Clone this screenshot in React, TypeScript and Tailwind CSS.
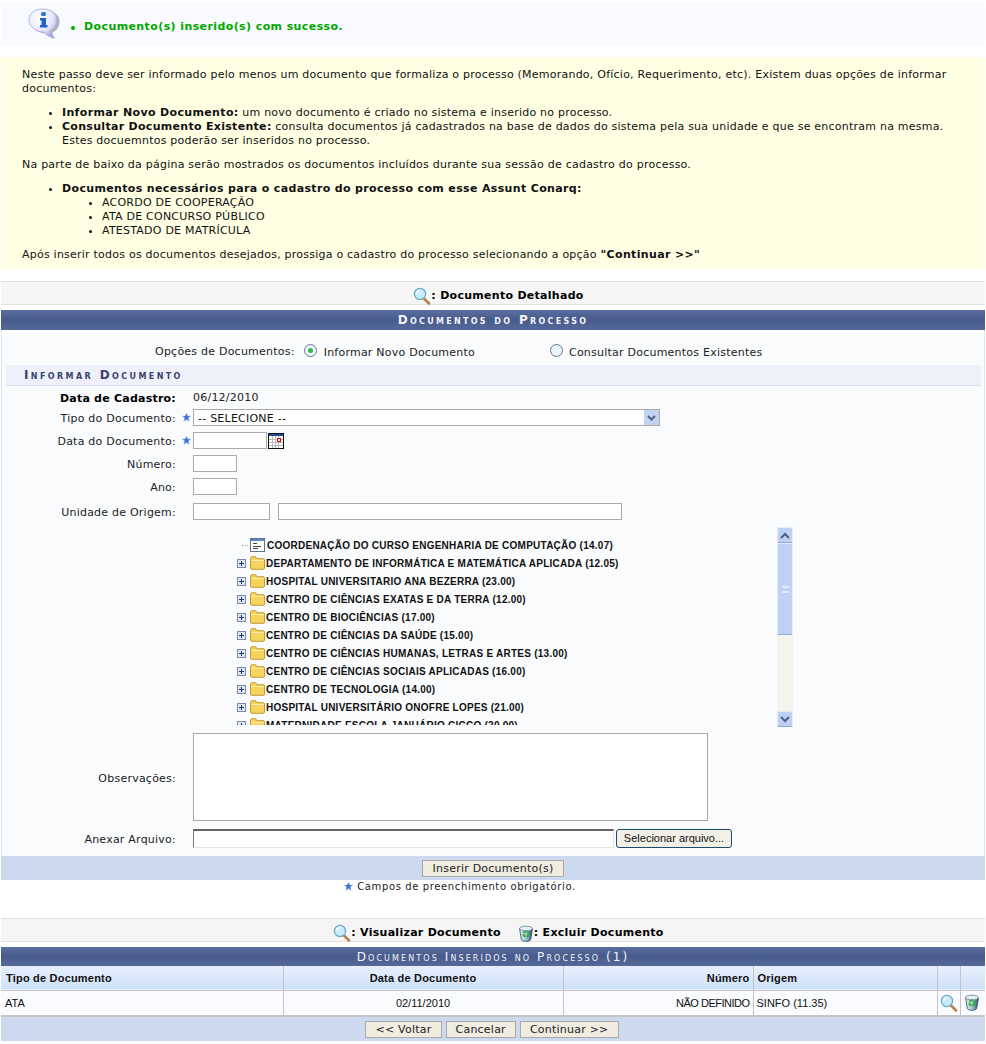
const VERDANA = "font-['DejaVu_Sans',Verdana,sans-serif]"

const UNITS = [
  'DEPARTAMENTO DE INFORMÁTICA E MATEMÁTICA APLICADA (12.05)',
  'HOSPITAL UNIVERSITARIO ANA BEZERRA (23.00)',
  'CENTRO DE CIÊNCIAS EXATAS E DA TERRA (12.00)',
  'CENTRO DE BIOCIÊNCIAS (17.00)',
  'CENTRO DE CIÊNCIAS DA SAÚDE (15.00)',
  'CENTRO DE CIÊNCIAS HUMANAS, LETRAS E ARTES (13.00)',
  'CENTRO DE CIÊNCIAS SOCIAIS APLICADAS (16.00)',
  'CENTRO DE TECNOLOGIA (14.00)',
  'HOSPITAL UNIVERSITÁRIO ONOFRE LOPES (21.00)',
  'MATERNIDADE ESCOLA JANUÁRIO CICCO (20.00)',
]

function InfoIcon() {
  const bubble = 'M15 1c8 0 14 4 14 11 0 5-3 9-7 11 0 2 1 4 3 6-4 0-7-2-9-5C8 24 1 19 1 12 1 5 7 1 15 1z'
  return (
    <svg width="34" height="32" viewBox="0 0 34 32">
      <defs>
        <radialGradient id="bubble" cx="35%" cy="30%" r="75%">
          <stop offset="0" stopColor="#ffffff" />
          <stop offset="0.65" stopColor="#e6e8fa" />
          <stop offset="1" stopColor="#a9aee6" />
        </radialGradient>
      </defs>
      <path d={bubble} transform="translate(2.500 1.500)" fill="#777777" opacity="0.55" />
      <path d={bubble} fill="url(#bubble)" stroke="#a4a9e0" strokeWidth="0.8" />
      <rect x="13" y="4" width="5" height="4" rx="1.500" fill="#2a79d8" />
      <path d="M12 10h6v7h1.500v2.500h-7.500V17h1.500v-4.500H12z" fill="#1e63c4" />
    </svg>
  )
}

function MagnifierIcon() {
  return (
    <svg width="18" height="18" viewBox="0 0 18 18">
      <path d="M10.500 11l5.500 5.500" stroke="#b8834a" strokeWidth="2.600" strokeLinecap="round" />
      <circle cx="7" cy="7" r="5.600" fill="#c9ecfa" stroke="#6fa9c9" strokeWidth="1.300" />
      <path d="M3.600 6.500a3.600 3.600 0 0 1 3-3" stroke="#ffffff" strokeWidth="1.400" fill="none" />
    </svg>
  )
}

function TrashIcon() {
  return (
    <svg width="16" height="17" viewBox="0 0 16 17">
      <defs>
        <linearGradient id="bin" x1="0" x2="1" y1="0" y2="0">
          <stop offset="0" stopColor="#dbe9ee" />
          <stop offset="0.5" stopColor="#a9c6d6" />
          <stop offset="1" stopColor="#234c78" />
        </linearGradient>
      </defs>
      <path d="M1.500 3.500l1.800 11c.2 1 2.200 1.800 4.700 1.800s4.500-.8 4.700-1.800l1.800-11z" fill="url(#bin)" stroke="#1a3658" strokeWidth="0.700" />
      <ellipse cx="8" cy="3.500" rx="6.500" ry="2.300" fill="#e6f1f2" stroke="#5f8298" strokeWidth="0.800" />
      <circle cx="8" cy="9" r="2.600" fill="none" stroke="#2fae2c" strokeWidth="1.800" strokeDasharray="3.500 1" />
    </svg>
  )
}

function StarIcon() {
  return (
    <svg width="9" height="9" viewBox="0 0 10 10">
      <path d="M5 .4l1.400 3h3.200L7 5.500l1 3.800L5 7.300 2 9.300l1-3.800L.4 3.400h3.200z" fill="#3a73d6" stroke="#8fb2ee" strokeWidth="0.500" />
    </svg>
  )
}

function CalendarIcon() {
  return (
    <svg width="16" height="16" viewBox="0 0 16 16" shapeRendering="crispEdges">
      <rect x="0.500" y="0.500" width="15" height="15" fill="#ffffff" stroke="#111111" />
      <rect x="1" y="1" width="14" height="2" fill="#1f4a94" />
      <path d="M1 6.500h14M1 9.500h14M1 12.500h14M4.500 3v12M7.500 3v12M10.500 3v12" stroke="#bcbcbc" />
      <rect x="9.500" y="5.500" width="3" height="3" fill="#ffffff" stroke="#ee0000" />
    </svg>
  )
}

function FolderIcon() {
  return (
    <svg width="15" height="14" viewBox="0 0 15 14">
      <path d="M.5 3V12c0 .8.500 1.300 1.300 1.300h11.400c.8 0 1.300-.5 1.300-1.300V4c0-.8-.5-1.300-1.300-1.300H7L5.800.8H2C1 .8.500 1.500.5 3z" fill="#f9d45c" stroke="#c09a3a" />
      <path d="M1.500 4.500h12" stroke="#fff0b0" />
    </svg>
  )
}

function PlusBox() {
  return (
    <svg width="9" height="9" viewBox="0 0 9 9" shapeRendering="crispEdges">
      <rect x="0.500" y="0.500" width="8" height="8" fill="#dfe5f2" stroke="#7d8ba8" />
      <path d="M2 4.500h5M4.500 2v5" stroke="#1d3a78" />
    </svg>
  )
}

function DocListIcon() {
  return (
    <svg width="15" height="14" viewBox="0 0 15 14" shapeRendering="crispEdges">
      <rect x="0.500" y="0.500" width="14" height="13" fill="#ffffff" stroke="#5d7398" />
      <rect x="1" y="1" width="13" height="2" fill="#5f86c4" />
      <path d="M3 5.500h4M3 8.500h8M3 10.500h5" stroke="#444444" />
    </svg>
  )
}

function ScrollButton({ up }: { up?: boolean }) {
  return (
    <div className="flex h-[16px] w-[16px] items-center justify-center rounded-[2px] border border-[#e6ecf9] border-b-[#8fa8d8] bg-[#bfd0f5]">
      <svg width="10" height="7" viewBox="0 0 10 7">
        <path d={up ? 'M1 6l4-4 4 4' : 'M1 1l4 4 4-4'} fill="none" stroke="#4d6185" strokeWidth="2" />
      </svg>
    </div>
  )
}

function Legend({ children }: { children: React.ReactNode }) {
  return (
    <div className="flex h-[24px] items-center justify-center border-y border-[#e0e0e0] bg-[#f5f5f5] pl-[11px] pt-[6px] text-[11px] font-bold tracking-[0.28px] text-black">
      {children}
    </div>
  )
}

function FormRow({ label, required, bold, className, children }: { label: string; required?: boolean; bold?: boolean; className?: string; children: React.ReactNode }) {
  return (
    <div className={`flex items-center ${className ?? ''}`}>
      <div className={`w-[174px] pt-[4px] text-right text-[11px] ${bold ? 'font-bold text-black' : 'text-[#222]'}`}>{label}</div>
      <div className="flex w-[17px] justify-center pl-[3px]">{required && <StarIcon />}</div>
      {children}
    </div>
  )
}

function TextBox({ className }: { className: string }) {
  return <input className={`h-[17px] border border-[#aaa] bg-white ${className}`} />
}

function FormButton({ className, children }: { className: string; children: React.ReactNode }) {
  return (
    <button className={`h-[17px] border border-[#a9a9a9] bg-[#f0ece0] font-['DejaVu_Sans',Verdana,sans-serif] text-[11px] leading-none tracking-[0.23px] text-[#222] ${className}`}>
      {children}
    </button>
  )
}

export default function App() {
  return (
    <div className={`h-[1044px] w-[986px] overflow-hidden bg-white pt-[2px] text-[11px] tracking-[0.23px] ${VERDANA}`}>
      {/* Message */}
      <div className="mx-[1px] flex h-[44px] items-center bg-[#f9fafd] pl-[27px]">
        <InfoIcon />
        <ul className="ml-[9px] mt-[7px] flex items-center gap-[9px] text-[11px] font-bold tracking-[0.4px] text-[#00a800]">
          <li className="h-[4px] w-[4px] rounded-full bg-[#00a800]" />
          <li>Documento(s) inserido(s) com sucesso.</li>
        </ul>
      </div>

      {/* Help text */}
      <div className="mx-[1px] mt-[11px] h-[212px] bg-[#ffffe3] pl-[21px] pr-[20px] pt-[11px] leading-[14px] text-[#111]">
        <p>
          Neste passo deve ser informado pelo menos um documento que formaliza o processo (Memorando, Ofício, Requerimento, etc). Existem duas opções de informar documentos:
        </p>
        <ul className="mt-[10px] list-disc pl-[40px]">
          <li><b className="tracking-[0.35px]">Informar Novo Documento:</b> um novo documento é criado no sistema e inserido no processo.</li>
          <li>
            <b className="tracking-[0.3px]">Consultar Documento Existente:</b> consulta documentos já cadastrados na base de dados do sistema pela sua unidade e que se encontram na mesma. <br />Estes docuemntos poderão ser inseridos no processo.
          </li>
        </ul>
        <p className="mt-[10px]">Na parte de baixo da página serão mostrados os documentos incluídos durante sua sessão de cadastro do processo.</p>
        <ul className="mt-[10px] list-disc pl-[40px]">
          <li>
            <b className="tracking-[0.35px]">Documentos necessários para o cadastro do processo com esse Assunt Conarq:</b>
            <ul className="list-disc pl-[40px]">
              <li>ACORDO DE COOPERAÇÃO</li>
              <li>ATA DE CONCURSO PÚBLICO</li>
              <li>ATESTADO DE MATRÍCULA</li>
            </ul>
          </li>
        </ul>
        <p className="mt-[10px]">
          Após inserir todos os documentos desejados, prossiga o cadastro do processo selecionando a opção <b className="tracking-[0.35px]">"Continuar &gt;&gt;"</b>
        </p>
      </div>

      {/* Form legend */}
      <div className="mx-[1px] mt-[12px]">
        <Legend>
          <MagnifierIcon />
          <span>: Documento Detalhado</span>
        </Legend>
      </div>

      {/* Form */}
      <div className="mx-[1px] mt-[5px]">
        <div className="flex h-[20px] items-center justify-center bg-gradient-to-b from-[#5b6e9f] via-[#475a8c] to-[#566a9a] text-[12px] font-bold tracking-[2.3px] text-[#f2f4fa] [font-variant:small-caps]">
          Documentos do Processo
        </div>
        <div className="h-[526px] border-x border-[#dfe5f0] bg-[#f9fbfd]">
          <div className="flex h-[35px] pt-[14px] text-[#222]">
            <div className="ml-[153px]">Opções de Documentos:</div>
            <div className="ml-[9px] flex h-[13px] w-[13px] items-center justify-center rounded-full border-[1.5px] border-[#5b7a97] bg-[#f4f7fb]">
              <span className="h-[5px] w-[5px] rounded-full bg-[#2fb84a]" />
            </div>
            <div className="ml-[7px] mt-[1px]">Informar Novo Documento</div>
            <div className="ml-[75px] h-[13px] w-[13px] rounded-full border-[1.5px] border-[#5b7a97] bg-[#eef2f9]" />
            <div className="ml-[6px] mt-[1px]">Consultar Documentos Existentes</div>
          </div>

          <div className="ml-[4px] mr-[3px] flex h-[21px] items-center border-b border-[#d5dcec] bg-[#eef1f9] pl-[18px] text-[12px] font-bold tracking-[2.4px] text-[#3a4270] [font-variant:small-caps]">
            Informar Documento
          </div>

          <FormRow label="Data de Cadastro:" bold className="mt-[4px] h-[14px]">
            <span className="pt-[2px] text-[#222]">06/12/2010</span>
          </FormRow>
          <FormRow label="Tipo do Documento:" required className="mt-[5px] h-[17px]">
            <div className="flex h-[17px] w-[467px] items-center justify-between border border-[#aaa] bg-white pl-[4px] text-[#111]">
              <span className="pt-[3px]">-- SELECIONE --</span>
              <div className="flex h-[15px] w-[15px] items-center justify-center bg-[#c3d2f3]">
                <svg width="9" height="6" viewBox="0 0 9 6"><path d="M1 1l3.500 3.500L8 1" fill="none" stroke="#4d6185" strokeWidth="2" /></svg>
              </div>
            </div>
          </FormRow>
          <FormRow label="Data do Documento:" required className="mt-[6px] h-[17px]">
            <TextBox className="w-[74px]" />
            <span className="ml-[1px]"><CalendarIcon /></span>
          </FormRow>
          <FormRow label="Número:" className="mt-[6px] h-[17px]">
            <TextBox className="w-[44px]" />
          </FormRow>
          <FormRow label="Ano:" className="mt-[6px] h-[17px]">
            <TextBox className="w-[44px]" />
          </FormRow>
          <FormRow label="Unidade de Origem:" className="mt-[8px] h-[17px]">
            <TextBox className="w-[77px]" />
            <TextBox className="ml-[8px] w-[344px]" />
          </FormRow>

          {/* Tree */}
          <div className="ml-[190px] mt-[7px] flex h-[200px] w-[601px]">
            <div className="h-[198px] flex-1 overflow-hidden pl-[45px] pt-[9px] font-['Liberation_Sans',Arial,sans-serif] text-[10px] font-bold tracking-[0.25px] text-[#111]">
              <div className="flex h-[18px] items-center">
                <span className="ml-[5px] mr-[2px] h-0 w-[6px] border-t border-dotted border-[#aaa]" />
                <DocListIcon />
                <span className="ml-[2px]">COORDENAÇÃO DO CURSO ENGENHARIA DE COMPUTAÇÃO (14.07)</span>
              </div>
              {UNITS.map((unit) => (
                <div key={unit} className="flex h-[18px] items-center">
                  <PlusBox />
                  <span className="ml-[4px]"><FolderIcon /></span>
                  <span className="ml-[1px] whitespace-nowrap">{unit}</span>
                </div>
              ))}
            </div>
            <div className="flex h-[200px] w-[16px] flex-col bg-[#f5f4ef]">
              <ScrollButton up />
              <div className="flex h-[92px] items-center justify-center rounded-[2px] border border-[#e6ecf9] border-b-[#8fa8d8] bg-[#bfd0f5]">
                <span className="h-[7px] w-[7px] border-y-2 border-[#e3ebfc]" />
              </div>
              <div className="flex-1" />
              <ScrollButton />
            </div>
          </div>

          <FormRow label="Observações:" className="mt-[6px] h-[88px]">
            <textarea className="h-[88px] w-[515px] resize-none border border-[#aaa] bg-white" />
          </FormRow>
          <FormRow label="Anexar Arquivo:" className="mt-[8px] h-[19px]">
            <input className="h-[19px] w-[421px] border border-b-[#e4e4e4] border-l-[#777] border-r-[#e4e4e4] border-t-2 border-t-[#666] bg-white" />
            <button className="ml-[2px] h-[19px] w-[116px] rounded-[3px] border border-[#1e4a6e] bg-[#f2f0e6] font-['Liberation_Sans',Arial,sans-serif] text-[11px] leading-none tracking-normal text-[#111]">
              Selecionar arquivo...
            </button>
          </FormRow>
        </div>
        <div className="flex h-[24px] items-center justify-center bg-[#cdd9ee]">
          <FormButton className="px-[10px]">Inserir Documento(s)</FormButton>
        </div>
      </div>

      <div className="mx-[1px] flex h-[13px] items-center justify-center gap-[4px] pr-[66px] text-[10px] text-[#222]">
        <StarIcon />
        <span className="tracking-[0.62px]">Campos de preenchimento obrigatório.</span>
      </div>

      {/* Table legend */}
      <div className="mx-[1px] mt-[25px]">
        <Legend>
          <MagnifierIcon />
          <span>: Visualizar Documento</span>
          <span className="ml-[17px]"><TrashIcon /></span>
          <span>: Excluir Documento</span>
        </Legend>
      </div>

      {/* Table */}
      <div className="mx-[1px] mt-[5px]">
        <div className="flex h-[19px] items-center justify-center bg-gradient-to-b from-[#5b6e9f] via-[#475a8c] to-[#566a9a] text-[12px] tracking-[2.1px] text-[#f2f4fa] [font-variant:small-caps]">
          Documentos Inseridos no Processo (1)
        </div>
        <table className="w-[984px] table-fixed border-collapse font-['Liberation_Sans',Arial,sans-serif] text-[11px] text-[#111]">
          <colgroup>
            <col className="w-[282px]" />
            <col className="w-[280px]" />
            <col className="w-[190px]" />
            <col className="w-[184px]" />
            <col className="w-[23px]" />
            <col className="w-[25px]" />
          </colgroup>
          <thead>
            <tr className="h-[24px] border-b border-[#c4c4c4] bg-gradient-to-b from-[#e6effc] to-[#cfe2fa] font-bold tracking-[0.2px]">
              <th className="border-r border-[#c4c4c4] pl-[5px] text-left">Tipo de Documento</th>
              <th className="border-r border-[#c4c4c4] text-center">Data de Documento</th>
              <th className="border-r border-[#c4c4c4] pr-[3px] text-right">Número</th>
              <th className="border-r border-[#c4c4c4] pl-[4px] text-left">Origem</th>
              <th className="border-r border-[#c4c4c4]" />
              <th />
            </tr>
          </thead>
          <tbody className="tracking-normal">
            <tr className="h-[26px] border-b-2 border-[#c4c4c4] bg-[#fafbfe]">
              <td className="border-r border-[#c4c4c4] pl-[4px]">ATA</td>
              <td className="border-r border-[#c4c4c4] text-center">02/11/2010</td>
              <td className="border-r border-[#c4c4c4] pr-[3px] text-right tracking-[-0.5px]">NÃO DEFINIDO</td>
              <td className="border-r border-[#c4c4c4] pl-[3px]">SINFO (11.35)</td>
              <td className="border-r border-[#c4c4c4] pl-[2px]"><MagnifierIcon /></td>
              <td className="pl-[3px]"><TrashIcon /></td>
            </tr>
          </tbody>
        </table>
        <div className="flex h-[24px] items-center justify-center gap-[4px] bg-[#cdd9ee] pr-[2px]">
          <FormButton className="px-[9px]">&lt;&lt; Voltar</FormButton>
          <FormButton className="px-[9px]">Cancelar</FormButton>
          <FormButton className="px-[9px]">Continuar &gt;&gt;</FormButton>
        </div>
      </div>
    </div>
  )
}
